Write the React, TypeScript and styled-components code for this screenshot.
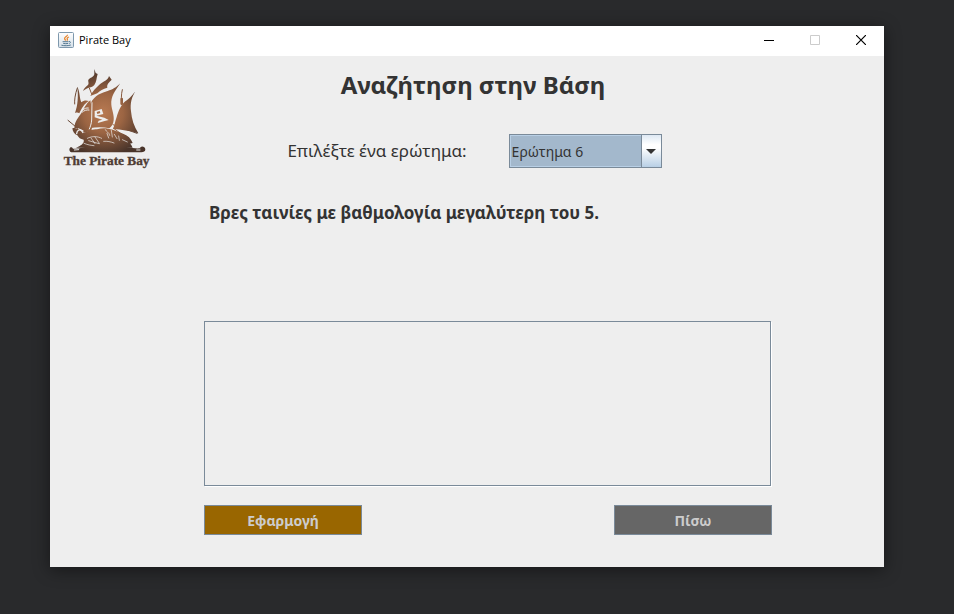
import React, { useState } from "react";
import styled, { createGlobalStyle } from "styled-components";

const GlobalStyle = createGlobalStyle`
  *, *::before, *::after { box-sizing: border-box; }
  body {
    margin: 0;
    background: #292a2c;
    color: #333;
    font-family: "Noto Sans", "Open Sans", sans-serif;
  }
`;

const Desktop = styled.div`
  display: flex;
  min-height: 100vh;
  padding: 26px 70px 47px 50px;
`;

const Window = styled.div`
  flex: 1;
  display: flex;
  flex-direction: column;
  background: #eee;
  box-shadow: 0 3px 16px rgba(0, 0, 0, 0.45);
`;

const TitleBar = styled.header`
  display: flex;
  align-items: center;
  height: 30px;
  padding: 0 0 2px 8px;
  background: #fff;
`;

const TitleText = styled.span`
  flex: 1;
  margin-left: 5px;
  color: #000;
  font-family: "Open Sans", sans-serif;
  font-size: 11px;
  line-height: 14px;
`;

const CaptionButton = styled.button`
  display: grid;
  place-items: center;
  width: 46px;
  height: 28px;
  padding: 0;
  border: 0;
  background: transparent;
  color: #000;

  &:disabled { color: #ccc; }
`;

const Content = styled.div`
  flex: 1;
  display: grid;
  grid-template-columns: 154px minmax(0, 1fr) 112px;
`;

const LogoCell = styled.div`
  padding: 4px 0 0 6px;
`;

const Main = styled.main`
  display: flex;
  flex-direction: column;
  padding: 12px 0 32px;
`;

const Heading = styled.h1`
  margin: 0 30px 0 0;
  font-size: 24px;
  line-height: 34px;
  text-align: center;
`;

const QueryRow = styled.div`
  display: flex;
  align-items: center;
  justify-content: center;
  gap: 42px;
  margin: 32px 27px 0 0;
`;

const QueryLabel = styled.label`
  font-size: 17px;
  line-height: 34px;
`;

const SelectFrame = styled.div`
  display: grid;
  grid-template-columns: 1fr 20px;
  width: 153px;
  height: 34px;
  border: 1px solid #7a8a99;
`;

const Select = styled.select`
  grid-area: 1 / 1 / 2 / 3;
  appearance: none;
  width: 100%;
  padding: 0 22px 0 1px;
  border: 1px solid #b8cfe5;
  border-radius: 0;
  background: #a3b8cc;
  color: #333;
  font-family: inherit;
  font-size: 14px;
`;

const SelectArrow = styled.span`
  grid-area: 1 / 2 / 2 / 3;
  z-index: 1;
  display: grid;
  place-items: center;
  border-left: 1px solid #7a8a99;
  background: linear-gradient(#dde8f3 0%, #fff 30%, #fff 40%, #b8cfe5 100%);
  pointer-events: none;
`;

const Description = styled.p`
  flex: 1;
  margin: 32px 0 0 5px;
  font-size: 17px;
  font-weight: 700;
  line-height: 26px;
`;

const Results = styled.textarea`
  display: block;
  width: calc(100% - 1px);
  height: 165px;
  margin: 0 0 19px;
  padding: 4px;
  border: 1px solid #7a8a99;
  border-radius: 0;
  background: #eee;
  box-shadow: 1px 1px 0 #fff;
  color: #333;
  font: inherit;
  resize: none;
  outline: none;
`;

const Actions = styled.div`
  display: flex;
  justify-content: space-between;
`;

const ActionButton = styled.button<{ $fill: string }>`
  width: 158px;
  height: 30px;
  padding: 0;
  border: 1px solid #7a8a99;
  background: ${({ $fill }) => $fill};
  color: #ccc;
  font-family: inherit;
  font-size: 14px;
  font-weight: 700;
`;

const JavaIcon = () => (
  <svg width="16" height="16" viewBox="0 0 16 16" aria-hidden="true">
    <defs>
      <linearGradient id="tile" x1="0" y1="0" x2="0" y2="1">
        <stop offset="0" stopColor="#fff" />
        <stop offset="1" stopColor="#d4dfe8" />
      </linearGradient>
    </defs>
    <rect x=".5" y=".5" width="15" height="15" rx="1" fill="url(#tile)" stroke="#7e98ad" />
    <path d="M9.4 2.8C9.9 4.2 6.6 4.9 6.6 6.6c0 1 .9 1.4 1.2 2M11 5C9.6 5.4 8.6 6.2 9.3 7.2c.4.6 0 1.1-.4 1.4" fill="none" stroke="#e88024" strokeWidth="1.2" />
    <path d="M4.6 9.7h5.8M5.2 11.4c1.7.4 3.5.4 5 0M10.8 9.5c2.2-.4 2.1 1.5.3 2M3.4 13.2c2.8.8 7.2.6 9.4-.2" fill="none" stroke="#557992" />
  </svg>
);

const ShipLogo = () => (
  <svg width="100" height="112" viewBox="0 0 300 336" role="img" aria-label="The Pirate Bay">
    <defs>
      <radialGradient id="wood" gradientUnits="userSpaceOnUse" cx="142" cy="158" r="132">
        <stop offset="0" stopColor="#b87a52" />
        <stop offset=".45" stopColor="#9c6543" />
        <stop offset="1" stopColor="#49342a" />
      </radialGradient>
    </defs>
    <g fill="url(#wood)">
      <path d="M115 27l4 12 6 3c-4 12-3 24-10 33-8 10-19 5-34 18 3-9 10-13 14-17 7-7-3-15 5-20 6-4 12-4 15-13z" />
      <path d="M103 108c6-14 17-25 27-34 12-10 26-13 29-26l8 11c-7 8-15 12-13 24-13 3-22 9-30 17z" />
      <path d="M104 130c13-27 34-31 51-37 15-5 25-10 38-23-16 23-29 40-27 64 1 15 9 29 7 47-1 11-6 19-13 24-20-5-40-4-60 0 9-26 1-51 4-75z" />
      <path d="M103 121c-12 8-19 26-27 38-9 15-19 22-21 45 14-1 22 3 28 14l23-5c6-22 0-48 2-61z" />
      <path d="M64 80c8 16 6 33 12 47 7-6 14-7 23-4-15 8-22 23-29 37-4-3-8-3-13-1 9-23 10-52 7-79z" />
      <path d="M242 87c-16 25-20 43-17 67 2 24 9 46 22 66-27-8-50-11-76-13 5-12 7-25 11-36 5-17 12-35 26-47 13-9 23-19 34-37z" />
      <path d="M49 205c13-4 25 4 31 15 14-5 28-14 43-12 25-8 47 0 80 14 13 5 21 13 27 27l-8 2c5 2 5 7 8 12H60c14-5 26-14 23-24-10-1-15-6-19-13-9-3-14-11-15-21z" />
      <path d="M42 263c3-3 8-1 9 3 16 2 31-4 46-7 31-5 61-2 91-1 21 1 41 9 65 7-3-6 14-9 15 3 0 7-5 9-12 9H49c-8 0-11-9-7-14z" />
    </g>
    <g fill="none" stroke="url(#wood)" strokeWidth="3" strokeLinecap="round">
      <path d="M64 84c-7 19-9 38-8 48M100 84l7 18M199 89c-4 15-3 30-2 45M36 181l29 24M171 194l72 26M173 205l42 31" />
      <path d="M197 117v14" strokeWidth="8" />
    </g>
    <g fill="none" stroke="#eee" strokeLinecap="round">
      <path d="M108 128l-1 52c-1 12-4 20-7 27" strokeWidth="3" />
      <path d="M78 157c7-6 13-8 21-7M80 151c5-6 11-8 17-7" strokeWidth="3" />
      <path d="M62 221c1-12 9-14 19-8" strokeWidth="4" />
      <path d="M94 235c15-8 32-6 43 0M98 242l31 9M105 234l12 17M117 231l13 19M84 250c12 5 21 6 30 7M148 209c3 8 11 6 13 17M153 220l5 14M166 211l3 20M175 223l8 13M188 228l2 13M143 244c11-1 21 1 31 5M199 239l15 7" strokeWidth="2" />
      <path d="M55 270l13-1M242 270h10" strokeWidth="3" />
    </g>
    <path d="M116 153l21-6 5 15-21 5 24 6 13 7-12 3-21 6 3-7 11-3-23-7z" fill="#eee" />
    <path d="M122 156l9-3 2 6-9 3z" fill="#a86c46" />
    <text x="23" y="315" fill="#4e3c34" stroke="#4e3c34" strokeWidth="1" fontFamily="Liberation Serif, serif" fontWeight="700" fontSize="40">The Pirate Bay</text>
  </svg>
);

export default function App() {
  const [query, setQuery] = useState("6");
  return (
    <>
      <GlobalStyle />
      <Desktop>
        <Window>
          <TitleBar>
            <JavaIcon />
            <TitleText>Pirate Bay</TitleText>
            <CaptionButton aria-label="Minimize">
              <svg width="10" height="10" aria-hidden="true"><path d="M0 5.5h10" stroke="currentColor" /></svg>
            </CaptionButton>
            <CaptionButton aria-label="Maximize" disabled>
              <svg width="10" height="10" aria-hidden="true"><path d="M.5.5h9v9h-9z" fill="none" stroke="currentColor" /></svg>
            </CaptionButton>
            <CaptionButton aria-label="Close">
              <svg width="10" height="10" aria-hidden="true"><path d="M0 0l10 10M10 0L0 10" stroke="currentColor" strokeWidth="1.2" /></svg>
            </CaptionButton>
          </TitleBar>
          <Content>
            <LogoCell><ShipLogo /></LogoCell>
            <Main>
              <Heading>Αναζήτηση στην Βάση</Heading>
              <QueryRow>
                <QueryLabel htmlFor="query">Επιλέξτε ένα ερώτημα:</QueryLabel>
                <SelectFrame>
                  <Select id="query" value={query} onChange={(e) => setQuery(e.target.value)}>
                    <option value="6">Ερώτημα 6</option>
                  </Select>
                  <SelectArrow>
                    <svg width="10" height="5" aria-hidden="true"><path d="M0 0h10L5 5z" fill="#333" /></svg>
                  </SelectArrow>
                </SelectFrame>
              </QueryRow>
              <Description>Βρες ταινίες με βαθμολογία μεγαλύτερη του 5.</Description>
              <Results aria-label="Αποτελέσματα" readOnly />
              <Actions>
                <ActionButton $fill="#960">Εφαρμογή</ActionButton>
                <ActionButton $fill="#666">Πίσω</ActionButton>
              </Actions>
            </Main>
          </Content>
        </Window>
      </Desktop>
    </>
  );
}
